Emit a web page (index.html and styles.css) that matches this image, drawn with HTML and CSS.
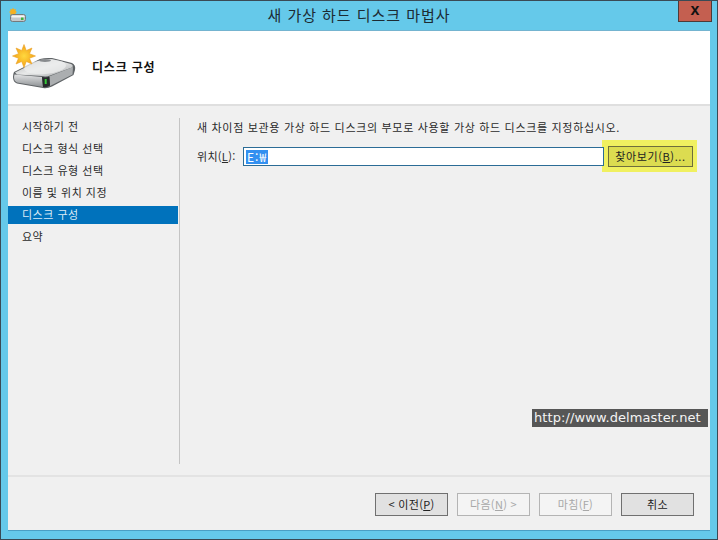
FILE: index.html
```html
<!DOCTYPE html>
<html lang="ko">
<head>
<meta charset="utf-8">
<title>새 가상 하드 디스크 마법사</title>
<link rel="stylesheet" href="styles.css">
</head>
<body>
<div class="window">
  <div class="titlebar">
    <svg class="app-icon" width="18" height="16" viewBox="9 8 18 16">
      <path d="M13 7.500 14 9.500 16 9 15.500 11 17 12 15.500 13 16 15 14 14.500 13 16.500 12 14.500 10 15 10.500 13 9 12 10.500 11 10 9 12 9.500Z" fill="#f5b021"/>
      <rect x="10.500" y="14.500" width="15" height="7" rx="2" fill="#c4c8cb" stroke="#75797c"/>
      <rect x="11.500" y="15.500" width="13" height="2" rx="1" fill="#f4f5f5"/>
      <rect x="21" y="17.500" width="2.500" height="2.500" fill="#3cb43c"/>
    </svg>
    <div class="title">새 가상 하드 디스크 마법사</div>
    <div class="close">x</div>
  </div>
  <div class="client">
    <div class="header">
      <svg class="hero" width="66" height="50" viewBox="12 42 66 50">
        <defs>
          <linearGradient id="disktop" x1="0" y1="0" x2="1" y2="1">
            <stop offset="0" stop-color="#a4a7aa"/>
            <stop offset=".5" stop-color="#e8e9e9"/>
            <stop offset="1" stop-color="#a5a8aa"/>
          </linearGradient>
          <linearGradient id="diskfront" x1="0" y1="0" x2="0" y2="1">
            <stop offset="0" stop-color="#e2e3e4"/>
            <stop offset="1" stop-color="#8d9194"/>
          </linearGradient>
          <radialGradient id="sun" cx=".5" cy=".5" r=".55">
            <stop offset="0" stop-color="#ffd93f"/>
            <stop offset="1" stop-color="#f29a12"/>
          </radialGradient>
        </defs>
        <path d="M14 73 40 60Q45 58.500 52 59L72 64Q76 66 75 71L73.500 76 52 87.500Q47 90 43 89L17 84.500Q13 83 13 78Q13 75 14 73Z" fill="#5f6366"/>
        <path d="M15 73.500 40 61Q45 59.500 52 60L71 65Q74 66.500 72 68.500L50 76.500Q46 78 42 77L17 75.500Z" fill="url(#disktop)"/>
        <ellipse cx="45" cy="68" rx="21" ry="7" fill="#eceded" opacity=".75" transform="rotate(-5 45 68)"/>
        <ellipse cx="45" cy="61.500" rx="6" ry="1.500" fill="#888b8e"/>
        <path d="M14.500 75.500 42 78 43 88 17 83.500Q14 82 14 78Z" fill="url(#diskfront)"/>
        <path d="M49 77.500 73 68 72.500 75.500 50 87Z" fill="#abaeb0"/>
        <path d="M42 78Q46 79 49.500 77.500L50 86.500Q46 89 43 88Z" fill="#26292b"/>
        <rect x="44.700" y="80" width="2" height="5" fill="#35c93a"/>
        <path d="M24 45.500 26.300 51.500 32 49 29.500 54.700 35.500 57 29.500 59.300 32 65 26.300 62.500 24 68.500 21.700 62.500 16 65 18.500 59.300 12.500 57 18.500 54.700 16 49 21.700 51.500Z" fill="url(#sun)" stroke="#eaa32a" stroke-width=".6"/>
      </svg>
      <div class="heading">디스크 구성</div>
    </div>
    <div class="body">
      <nav class="steps">
        <div class="step">시작하기 전</div>
        <div class="step">디스크 형식 선택</div>
        <div class="step">디스크 유형 선택</div>
        <div class="step">이름 및 위치 지정</div>
        <div class="step active">디스크 구성</div>
        <div class="step">요약</div>
      </nav>
      <div class="pane">
        <p class="intro">새 차이점 보관용 가상 하드 디스크의 부모로 사용할 가상 하드 디스크를 지정하십시오.</p>
        <div class="field">
          <label class="label">위치(<u>L</u>):</label>
          <div class="input"><span class="selected">E:₩</span></div>
          <div class="highlight"><button class="btn browse">찾아보기(<u>B</u>)...</button></div>
        </div>
      </div>
      <div class="watermark">http://www.delmaster.net</div>
    </div>
    <div class="footer">
      <button class="btn">&lt; 이전(<u>P</u>)</button>
      <button class="btn disabled">다음(<u>N</u>) &gt;</button>
      <button class="btn disabled">마침(<u>F</u>)</button>
      <button class="btn">취소</button>
    </div>
  </div>
</div>
</body>
</html>
```
FILE: styles.css
```css
* { box-sizing: border-box; }
html, body { margin: 0; padding: 0; }
body {
  width: 718px;
  height: 540px;
  overflow: hidden;
  font-family: "Noto Sans CJK KR", "Liberation Sans", sans-serif;
  font-size: 11px;
  color: #222;
}
.window {
  width: 718px;
  height: 540px;
  background: #65c9ea;
  border: 1px solid #3a4a55;
  padding: 0 7px 8px;
  display: flex;
  flex-direction: column;
}
.titlebar {
  height: 29px;
  flex: none;
  display: flex;
  align-items: center;
  position: relative;
  margin: 0 -7px;
  padding-left: 8px;
}
.app-icon { flex: none; margin-top: 1px; }
.title {
  position: absolute;
  left: 0;
  right: 0;
  top: 3px;
  text-align: center;
  font-size: 15px;
  line-height: 22px;
  letter-spacing: .95px;
  color: #1c2b33;
}
.close {
  position: absolute;
  right: 5px;
  top: 0;
  width: 34px;
  height: 21px;
  background: #c45f50;
  border: 1px solid #4d3a38;
  border-top: 0;
  color: #111;
  font: bold 16px/17px "Liberation Sans", sans-serif;
  text-align: center;
}
.client {
  flex: 1;
  display: flex;
  flex-direction: column;
  background: #f0f0f0;
  border-top: 1px solid #74b4d0;
  border-bottom: 1px solid #4a9fc4;
  min-height: 0;
}
.header {
  height: 75px;
  flex: none;
  display: flex;
  align-items: flex-start;
  background: #fff;
  border-bottom: 2px solid #dfdfdf;
  padding-left: 4px;
}
.hero { flex: none; margin: 10px 14px 0 0; }
.heading {
  margin-top: 27px;
  font-size: 12px;
  line-height: 18px;
  font-weight: 700;
  color: #111;
  letter-spacing: .8px;
}
.body {
  flex: 1;
  display: flex;
  padding-top: 12px;
  position: relative;
  min-height: 0;
}
.steps {
  width: 172px;
  height: 346px;
  flex: none;
  display: flex;
  flex-direction: column;
  gap: 4px;
  border-right: 1px solid #c4c4c4;
}
.step {
  width: 170px;
  height: 18px;
  line-height: 17px;
  padding-left: 14px;
  color: #2a2a2a;
  letter-spacing: .5px;
}
.step.active { background: #0072bc; color: #dbeaf5; }
.pane {
  flex: 1;
  padding-left: 17px;
  min-width: 0;
}
.intro {
  margin: 0;
  line-height: 18px;
  color: #2a2a2a;
  letter-spacing: .68px;
  white-space: nowrap;
}
.field {
  display: flex;
  align-items: center;
  margin-top: 4px;
}
.label { width: 46px; flex: none; color: #2a2a2a; letter-spacing: .3px; }
.input {
  position: relative;
  z-index: 1;
  width: 361px;
  height: 19px;
  flex: none;
  background: #fff;
  border: 1px solid #2b6c96;
  padding: 2px 0 0 2px;
  line-height: 14px;
}
.selected {
  display: inline-block;
  background: #3390f0;
  color: #fff;
  height: 14px;
  font-size: 12px;
  line-height: 14px;
  letter-spacing: 1px;
  padding: 0 1px;
}
.highlight {
  flex: none;
  margin-left: -2px;
  padding: 6px 4px 5px 6px;
  background: #f0f060;
}
.btn {
  width: 73px;
  height: 23px;
  padding: 0 0 2px;
  border: 1px solid #707070;
  background: #e1e1e1;
  color: #222;
  font: inherit;
  letter-spacing: .3px;
}
.btn.browse {
  display: block;
  width: 85px;
  height: 21px;
  background: #dcdc50;
  border-color: #6e6e3c;
  letter-spacing: .6px;
}
.btn.disabled {
  background: #f4f4f4;
  border-color: #b4b4b4;
  color: #a8a8a8;
}
.footer {
  height: 55px;
  flex: none;
  display: flex;
  justify-content: flex-end;
  gap: 9px;
  padding: 16px 16px 0 0;
  border-top: 2px solid #e3e3e3;
}
.watermark {
  position: absolute;
  left: 524px;
  top: 303px;
  width: 176px;
  height: 18px;
  background: #565656;
  color: #f4f4f4;
  font: 13px/17px "DejaVu Sans", sans-serif;
  letter-spacing: .09px;
  padding-left: 2px;
  white-space: nowrap;
}
```
